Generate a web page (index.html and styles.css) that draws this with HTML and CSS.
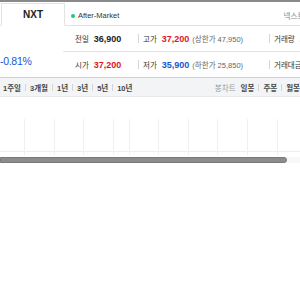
FILE: index.html
```html
<!DOCTYPE html>
<html lang="ko">
<head>
  <meta charset="UTF-8" />
  <title>NXT 시세</title>
  <link rel="stylesheet" href="styles.css">
</head>
<body>
  <div class="top-line"></div>

  <div class="header">
    <div class="tab active">NXT</div>
    <div class="status"><span class="dot"></span>After-Market</div>
    <div class="source">넥스트레이드</div>
  </div>

  <div class="quote">
    <div class="rate">-0.81%</div>
    <div class="table">
      <div class="row">
        <div class="cell c1"><span class="lbl">전일</span><b class="val">36,900</b></div>
        <div class="cell c2"><span class="sep"></span><span class="lbl">고가</span><b class="val up">37,200</b><span class="sub">(상한가 47,950)</span></div>
        <div class="cell c3"><span class="sep"></span><span class="lbl">거래량</span><b class="val">2</b></div>
      </div>
      <div class="row">
        <div class="cell c1"><span class="lbl">시가</span><b class="val up">37,200</b></div>
        <div class="cell c2"><span class="sep"></span><span class="lbl">저가</span><b class="val down">35,900</b><span class="sub">(하한가 25,850)</span></div>
        <div class="cell c3"><span class="sep"></span><span class="lbl">거래대금</span></div>
      </div>
    </div>
  </div>

  <div class="periods">
    <div class="group">
      <span>1주일</span><i></i><span>3개월</span><i></i><span>1년</span><i></i><span>3년</span><i></i><span>5년</span><i></i><span>10년</span>
    </div>
    <div class="group right">
      <span class="muted">봉차트</span><span>일봉</span><i></i><span>주봉</span><i></i><span>월봉</span>
    </div>
  </div>

  <div class="chart">
    <div class="col w25"></div>
    <div class="col w30"></div>
    <div class="col w29"></div>
    <div class="col w30"></div>
    <div class="col w16"></div>
    <div class="col w29"></div>
    <div class="col w30"></div>
    <div class="col w29"></div>
    <div class="col w30"></div>
    <div class="col w30"></div>
    <div class="col w22"></div>
  </div>

  <div class="scroll">
    <div class="thumb"></div>
  </div>
</body>
</html>
```

FILE: styles.css
```css
:root {
  --red: #e0141e;
  --blue: #1657d4;
  --line: #e3e3e3;
  --text: #222;
}
body {
  margin: 0;
  width: 300px;
  overflow: hidden;
  font-family: "Liberation Sans", "Noto Sans CJK KR", sans-serif;
  color: var(--text);
  background: #fff;
}
.top-line { height: 2px; background: #8a8a8a; }

.header {
  display: flex;
  align-items: flex-end;
  height: 23px;
  border-bottom: 1px solid var(--line);
}
.tab {
  box-sizing: border-box;
  width: 64px;
  height: 23px;
  margin-left: 1px;
  margin-bottom: -1px;
  border: 1px solid var(--line);
  border-bottom: 1px solid #fff;
  background: #fff;
  text-align: center;
  font-size: 10px;
  font-weight: bold;
  line-height: 21px;
}
.status {
  display: flex;
  align-items: center;
  align-self: center;
  margin-left: 6px;
  margin-top: 4px;
  font-size: 7.5px;
  color: #333;
}
.dot {
  width: 4px;
  height: 4px;
  border-radius: 50%;
  background: #1fc48d;
  margin-right: 3px;
}
.source {
  align-self: center;
  margin-left: auto;
  margin-right: -25px;
  margin-top: 4px;
  font-size: 7.5px;
  color: #888;
  white-space: nowrap;
}

.quote {
  display: flex;
  height: 51px;
  border-bottom: 1px solid #cfcfcf;
}
.rate {
  width: 63px;
  flex: none;
  padding-top: 29px;
  font-size: 10.5px;
  letter-spacing: -0.3px;
  color: var(--blue);
}
.table { flex: 1; }
.row {
  display: flex;
  align-items: center;
  height: 25px;
  white-space: nowrap;
}
.row + .row { border-top: 1px solid var(--line); }
.cell { display: flex; align-items: center; }
.c1 { width: 63px; padding-left: 12px; }
.c2 { width: 131px; }
.c3 { flex: 1; }
.sep {
  width: 1px;
  height: 9px;
  background: #d5d5d5;
  margin-right: 4px;
}
.lbl { font-size: 7.5px; color: #333; margin-right: 5px; }
.val { font-size: 9px; }
.up { color: var(--red); }
.down { color: var(--blue); }
.sub { font-size: 7.5px; color: #666; margin-left: 3px; }

.periods {
  display: flex;
  justify-content: space-between;
  height: 18px;
  background: #f3f4f6;
  border-bottom: 1px solid #e8e9ec;
  font-size: 7.5px;
  font-weight: bold;
  color: #444;
  white-space: nowrap;
}
.group { display: flex; align-items: center; padding-left: 3px; }
.group i {
  width: 1px;
  height: 7px;
  background: #d4d4d4;
  margin: 0 4px;
}
.group.right { margin-right: 0; }
.group .muted { color: #999; font-weight: normal; margin-right: 5px; }

.chart {
  display: flex;
  height: 36px;
  margin-top: 22px;
  background: linear-gradient(#eee, #eee) 0 32px / 100% 1px no-repeat;
}
.col { box-sizing: border-box; border-right: 1px solid #f0f0f0; flex: none; }
.w16 { width: 16px; }
.w22 { width: 22px; border-right: 0; }
.w25 { width: 25px; }
.w29 { width: 29px; }
.w30 { width: 30px; }

.scroll {
  height: 6px;
  margin-top: 2px;
  background: #f7f7f7;
}
.thumb {
  box-sizing: border-box;
  width: 287px;
  height: 6px;
  background: #8c8c8c;
  border: 1px solid #7a7a7a;
  border-radius: 0 3px 3px 0;
}
```
